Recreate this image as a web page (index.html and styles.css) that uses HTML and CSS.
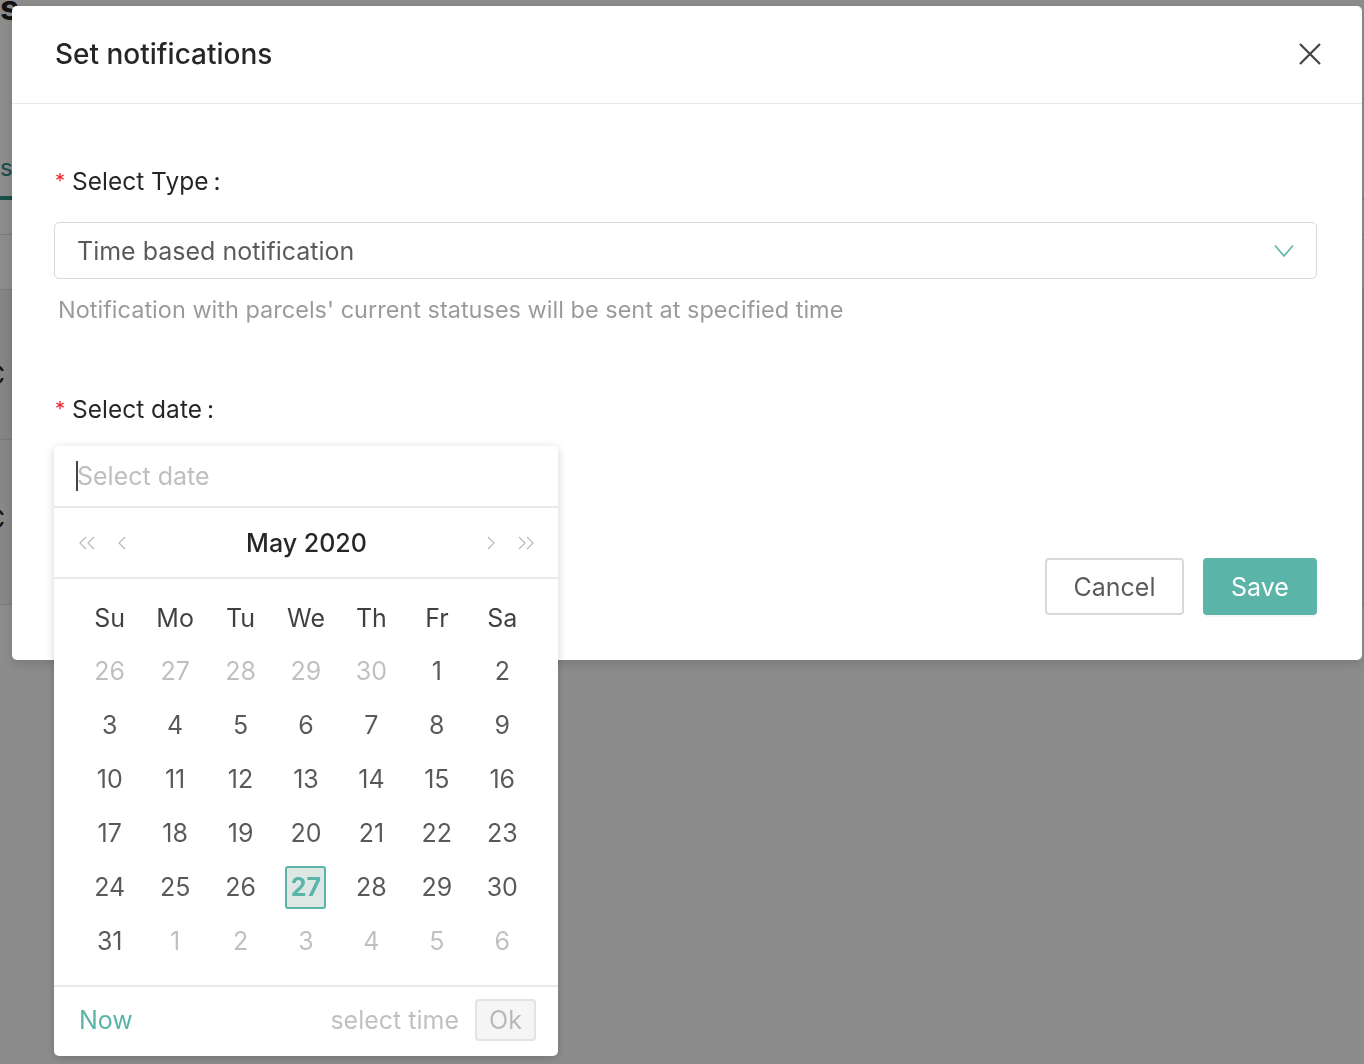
FILE: index.html
```html
<!DOCTYPE html>
<html>
    <head>
        <meta name="viewport" content="width=device-width"/>
        <title>Set notifications</title>
        <link rel="stylesheet" href="styles.css">
    </head>
    <body>
        <!-- page behind the mask, only a sliver shows at the edges -->
        <div class="page">
            <div class="page-title">s</div>
            <div class="page-tabs"><span class="page-tab">s</span></div>
            <div class="page-row page-row-short"></div>
            <div class="page-row"></div>
            <div class="page-row page-row-dark">C</div>
            <div class="page-row page-row-dark">C</div>
        </div>
        <div class="mask"></div>

        <div class="modal-wrap">
            <div class="modal">
                <div class="modal-header">
                    <div class="modal-title">Set notifications</div>
                    <button class="modal-close" aria-label="Close">
                        <svg width="24" height="24" viewBox="0 0 24 24"><path d="M2 2 L22 22 M22 2 L2 22" stroke="#444" stroke-width="2.2" fill="none"/></svg>
                    </button>
                </div>

                <div class="modal-body">
                    <div class="form-item">
                        <div class="form-label"><span class="required">*</span>Select Type<span class="colon">:</span></div>
                        <div class="select">
                            <span class="select-value">Time based notification</span>
                            <svg class="select-arrow" width="20" height="14" viewBox="0 0 20 14"><path d="M1 1.5 L10 12 L19 1.5" stroke="#5ab4a8" stroke-width="1.6" fill="none"/></svg>
                        </div>
                        <div class="form-help">Notification with parcels' current statuses will be sent at specified time</div>
                    </div>

                    <div class="form-item form-item-date">
                        <div class="form-label"><span class="required">*</span>Select date<span class="colon">:</span></div>
                        <div class="date-field">
                            <div class="picker">
                                <div class="picker-input"><span class="caret"></span><span class="placeholder">Select date</span></div>
                                <div class="picker-header">
                                    <div class="picker-nav">
                                        <svg width="20" height="16" viewBox="0 0 20 16"><path d="M9 2 L3 8 L9 14 M17 2 L11 8 L17 14" stroke="#bbb" stroke-width="1.3" fill="none"/></svg>
                                        <svg width="12" height="16" viewBox="0 0 12 16"><path d="M9 2 L3 8 L9 14" stroke="#bbb" stroke-width="1.3" fill="none"/></svg>
                                    </div>
                                    <div class="picker-month">May 2020</div>
                                    <div class="picker-nav">
                                        <svg width="12" height="16" viewBox="0 0 12 16"><path d="M3 2 L9 8 L3 14" stroke="#bbb" stroke-width="1.3" fill="none"/></svg>
                                        <svg width="20" height="16" viewBox="0 0 20 16"><path d="M3 2 L9 8 L3 14 M11 2 L17 8 L11 14" stroke="#bbb" stroke-width="1.3" fill="none"/></svg>
                                    </div>
                                </div>
                                <div class="picker-body">
                                    <div class="week">
                                        <span>Su</span><span>Mo</span><span>Tu</span><span>We</span><span>Th</span><span>Fr</span><span>Sa</span>
                                    </div>
                                    <div class="days">
                                        <span class="other">26</span><span class="other">27</span><span class="other">28</span><span class="other">29</span><span class="other">30</span><span>1</span><span>2</span>
                                        <span>3</span><span>4</span><span>5</span><span>6</span><span>7</span><span>8</span><span>9</span>
                                        <span>10</span><span>11</span><span>12</span><span>13</span><span>14</span><span>15</span><span>16</span>
                                        <span>17</span><span>18</span><span>19</span><span>20</span><span>21</span><span>22</span><span>23</span>
                                        <span>24</span><span>25</span><span>26</span><span class="today"><b>27</b></span><span>28</span><span>29</span><span>30</span>
                                        <span>31</span><span class="other">1</span><span class="other">2</span><span class="other">3</span><span class="other">4</span><span class="other">5</span><span class="other">6</span>
                                    </div>
                                </div>
                                <div class="picker-footer">
                                    <a class="picker-now">Now</a>
                                    <span class="picker-time">select time</span>
                                    <button class="picker-ok">Ok</button>
                                </div>
                            </div>
                        </div>
                    </div>

                    <div class="modal-actions">
                        <button class="btn btn-cancel">Cancel</button>
                        <button class="btn btn-primary">Save</button>
                    </div>
                </div>
            </div>
        </div>
    </body>
</html>
```

FILE: styles.css
```css
* {
    box-sizing: border-box;
}
body {
    margin: 0;
    background: #fff;
    font-family: Inter, "Noto Sans", sans-serif;
    color: rgba(0, 0, 0, .65);
    overflow: hidden;
}
button {
    font-family: inherit;
}

/* page behind the mask */
.page {
    height: 1064px;
}
.page-title {
    height: 159px;
    margin-top: -9px;
    line-height: 34px;
    font-size: 34px;
    font-weight: 700;
    color: #222;
}
.page-tabs {
    height: 50px;
    border-bottom: 1px solid #ddd;
}
.page-tab {
    display: inline-block;
    height: 50px;
    padding: 0 8px 0 0;
    line-height: 36px;
    font-size: 24px;
    color: #2f8f84;
    border-bottom: 4px solid #2f8f84;
}
.page-row {
    height: 55px;
    border-bottom: 1px solid #ddd;
}
.page-row-short {
    height: 35px;
}
.page-row-dark {
    height: 150px;
    padding-top: 70px;
    margin-left: -14px;
    line-height: 30px;
    font-size: 26px;
    color: #222;
    background: #f2f2f2;
    border-bottom: 1px solid #ddd;
}
.page-row-dark + .page-row-dark {
    height: 165px;
    padding-top: 64px;
    background: #f6f6f6;
}

.mask {
    position: fixed;
    inset: 0;
    background: rgba(0, 0, 0, .45);
}

/* modal */
.modal-wrap {
    position: fixed;
    inset: 0;
    padding: 6px 2px 0 12px;
}
.modal {
    background: #fff;
    border-radius: 5px;
    box-shadow: 0 4px 12px rgba(0, 0, 0, .15);
}
.modal-header {
    display: flex;
    align-items: center;
    justify-content: space-between;
    height: 98px;
    padding: 0 40px 2px 43px;
    border-bottom: 1px solid #e8e8e8;
}
.modal-title {
    font-size: 28px;
    font-weight: 500;
    color: rgba(0, 0, 0, .85);
}
.modal-close {
    display: flex;
    padding: 0;
    border: 0;
    background: none;
}
.modal-body {
    padding: 57px 45px 45px 42px;
}

.form-label {
    display: flex;
    align-items: center;
    height: 40px;
    font-size: 24.5px;
    color: rgba(0, 0, 0, .85);
}
.required {
    width: 17px;
    margin-left: 1px;
    margin-top: 8px;
    align-self: flex-start;
    font-size: 20px;
    color: #f5222d;
}
.colon {
    margin-left: 5px;
}
.select {
    display: flex;
    align-items: center;
    justify-content: space-between;
    height: 57px;
    margin-top: 21px;
    padding: 0 22px 0 22px;
    border: 1px solid #d9d9d9;
    border-radius: 5px;
    font-size: 25px;
}
.select-value {
    color: rgba(0, 0, 0, .65);
}
.form-help {
    margin-top: 15px;
    padding-left: 4px;
    line-height: 32px;
    font-size: 23.5px;
    color: rgba(0, 0, 0, .4);
}
.form-item-date {
    margin-top: 63px;
}
.date-field {
    position: relative;
    height: 57px;
    margin-top: 17px;
}

/* date picker popup */
.picker {
    position: absolute;
    top: 0;
    left: 0;
    width: 504px;
    z-index: 2;
    background: #fff;
    border-radius: 5px;
    box-shadow: 0 2px 10px rgba(0, 0, 0, .18);
}
.picker-input {
    display: flex;
    align-items: center;
    height: 62px;
    padding: 0 22px;
    border-bottom: 2px solid #e8e8e8;
    font-size: 25px;
}
.caret {
    width: 2px;
    height: 30px;
    margin-right: -1px;
    background: #444;
}
.placeholder {
    color: #bfbfbf;
}
.picker-header {
    display: flex;
    align-items: center;
    justify-content: space-between;
    height: 71px;
    padding: 0 22px 0 23px;
    border-bottom: 2px solid #e8e8e8;
}
.picker-nav {
    display: flex;
    align-items: center;
    gap: 19px;
}
.picker-month {
    font-size: 25px;
    font-weight: 500;
    color: rgba(0, 0, 0, .85);
}
.picker-body {
    padding: 14px 23px 17px;
    border-bottom: 2px solid #e8e8e8;
}
.week,
.days {
    display: grid;
    grid-template-columns: repeat(7, 1fr);
    font-size: 25px;
    text-align: center;
}
.week span {
    line-height: 51px;
    color: rgba(0, 0, 0, .75);
}
.days span {
    display: flex;
    align-items: center;
    justify-content: center;
    height: 54px;
    color: rgba(0, 0, 0, .65);
}
.days .other {
    color: rgba(0, 0, 0, .25);
}
.days .today b {
    display: flex;
    align-items: center;
    justify-content: center;
    width: 41px;
    height: 43px;
    border: 2px solid #5ab4a8;
    border-radius: 3px;
    background: #dde8e5;
    color: #5ab4a8;
    font-weight: 700;
}
.picker-footer {
    display: flex;
    align-items: center;
    height: 69px;
    padding: 0 22px 4px 25px;
    font-size: 25px;
}
.picker-now {
    color: #5ab4a8;
}
.picker-time {
    margin-left: auto;
    margin-right: 16px;
    color: rgba(0, 0, 0, .25);
}
.picker-ok {
    width: 61px;
    height: 42px;
    padding: 0;
    border: 2px solid #e3e3e3;
    border-radius: 4px;
    background: #f5f5f5;
    font-size: 25px;
    color: rgba(0, 0, 0, .25);
}

/* footer buttons */
.modal-actions {
    display: flex;
    justify-content: flex-end;
    gap: 19px;
    margin-top: 55px;
}
.btn {
    height: 57px;
    padding: 0;
    border: 2px solid #d9d9d9;
    border-radius: 4px;
    background: #fff;
    font-size: 25px;
    color: rgba(0, 0, 0, .65);
}
.btn-cancel {
    width: 139px;
}
.btn-primary {
    width: 114px;
    border-color: #5ab4a8;
    background: #5ab4a8;
    color: #fff;
    box-shadow: 0 2px 0 rgba(0, 0, 0, .04);
}
```
